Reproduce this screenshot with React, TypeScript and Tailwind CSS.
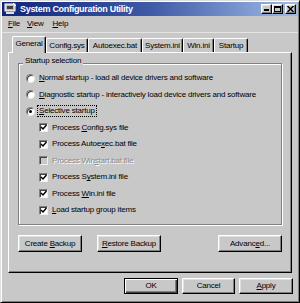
import React from "react";

const raised =
  "border border-t-white border-l-white border-r-black border-b-black shadow-[inset_-1px_-1px_0_#808080,inset_1px_1px_0_#dfdfdf]";

function Btn({ children, w, def }: { children: React.ReactNode; w: string; def?: boolean }) {
  return (
    <div
      className={
        (def
          ? "border border-black shadow-[inset_1px_1px_0_#fff,inset_-1px_-1px_0_#404040,inset_-2px_-2px_0_#808080] "
          : raised + " ") +
        w +
        " h-full flex items-center justify-center text-black"
      }
    >
      <span>{children}</span>
    </div>
  );
}

function Radio({ checked }: { checked?: boolean }) {
  return (
    <span className="w-[9px] h-[9px] shrink-0 rounded-full bg-white border border-t-[#808080] border-l-[#808080] border-r-[#e8e8e8] border-b-[#e8e8e8] shadow-[inset_1px_1px_0_#404040] flex items-center justify-center">
      {checked && <span className="w-[3px] h-[3px] rounded-full bg-black" />}
    </span>
  );
}

function Check({ checked, disabled }: { checked?: boolean; disabled?: boolean }) {
  return (
    <span
      className={
        "w-[9px] h-[9px] shrink-0 border border-t-[#808080] border-l-[#808080] border-r-[#f0f0f0] border-b-[#f0f0f0] shadow-[inset_1px_1px_0_#404040] flex items-center justify-center " +
        (disabled ? "bg-[#c8c8c8]" : "bg-white")
      }
    >
      {checked && (
        <svg width="7" height="7" viewBox="0 0 7 7">
          <path d="M1 3 L3 5 L6.5 1" stroke="#000" strokeWidth="1.5" fill="none" />
        </svg>
      )}
    </span>
  );
}

function Tab({ label, w, selected }: { label: React.ReactNode; w: string; selected?: boolean }) {
  return (
    <div
      className={
        w +
        " flex items-center justify-center rounded-t-[2px] border-t border-l border-r border-t-white border-l-white border-r-black shadow-[inset_-1px_0_0_#808080] bg-[#c8c8c8] " +
        (selected ? "h-[17px] -mb-[1px] relative z-10 pb-[2px]" : "h-[14px]")
      }
    >
      {label}
    </div>
  );
}

export default function App() {
  return (
    <div className="w-[300px] h-[303px] bg-[#c8c8c8] border border-t-[#dfdfdf] border-l-[#dfdfdf] border-r-black border-b-black shadow-[inset_1px_1px_0_#fff,inset_-1px_-1px_0_#808080] p-[1px] font-['Liberation_Sans',Arial,sans-serif] text-[8px] tracking-[-0.2px] text-black leading-none overflow-hidden">
      {/* Title bar */}
      <div className="h-[14px] flex items-center bg-linear-to-r from-[#12247a] via-[#3f5aa6] to-[#a3bde6]">
        <svg width="13" height="12" viewBox="0 0 13 12" className="ml-[2px]">
          <rect x="1" y="1" width="10" height="7" fill="#c0c0c0" stroke="#fff" strokeWidth="1" />
          <rect x="3" y="3" width="6" height="3" fill="#404040" />
          <rect x="2" y="9" width="8" height="2" fill="#e0e0e0" />
          <path d="M9 0 L12 3" stroke="#fff" strokeWidth="1" />
        </svg>
        <span className="ml-[3px] text-white font-bold text-[9px] tracking-[-0.3px]">System Configuration Utility</span>
        <div className="ml-auto flex items-center mr-[2px]">
          <div className={raised + " w-[11px] h-[10px] bg-[#c8c8c8] flex items-end justify-center pb-[2px]"}>
            <span className="w-[5px] h-[2px] bg-black -ml-[1px]" />
          </div>
          <div className={raised + " w-[11px] h-[10px] bg-[#c8c8c8] flex items-center justify-center"}>
            <span className="w-[7px] h-[6px] border border-black border-t-2" />
          </div>
          <div className={raised + " ml-[2px] w-[11px] h-[10px] bg-[#c8c8c8] flex items-center justify-center"}>
            <svg width="7" height="6" viewBox="0 0 7 6">
              <path d="M0.5 0 L6.5 6 M6.5 0 L0.5 6" stroke="#000" strokeWidth="1.5" />
            </svg>
          </div>
        </div>
      </div>

      {/* Menu */}
      <div className="h-[17px] flex items-center border-b border-b-[#e4e4e4]">
        <span className="ml-[6px]"><u>F</u>ile</span>
        <span className="ml-[7px]"><u>V</u>iew</span>
        <span className="ml-[9px]"><u>H</u>elp</span>
      </div>

      {/* Tabs */}
      <div className="mt-[3px] ml-[6px] pl-[4px] h-[16px] flex items-end">
        <Tab label="General" w="w-[34px]" selected />
        <Tab label="Config.sys" w="w-[42px]" />
        <Tab label="Autoexec.bat" w="w-[54px]" />
        <Tab label="System.ini" w="w-[41px]" />
        <Tab label="Win.ini" w="w-[31px]" />
        <Tab label="Startup" w="w-[34px]" />
      </div>

      {/* Panel */}
      <div className="ml-[6px] w-[284px] h-[221px] border border-t-white border-l-white border-r-black border-b-black shadow-[inset_-1px_-1px_0_#808080] pl-[9px] pt-[10px]">
        <div className="relative w-[264px] h-[162px] border border-[#808080] shadow-[1px_1px_0_#fff,inset_1px_1px_0_#fff] pt-[6px] pl-[7px]">
          <span className="absolute left-[4px] top-[-8px] leading-[10px] px-[2px] bg-[#c8c8c8]">Startup selection</span>
          <div className="h-[16.5px] flex items-center gap-[4px]">
            <Radio />
            <span><u>N</u>ormal startup - load all device drivers and software</span>
          </div>
          <div className="h-[16.5px] flex items-center gap-[4px]">
            <Radio />
            <span><u>D</u>iagnostic startup - interactively load device drivers and software</span>
          </div>
          <div className="h-[16.5px] flex items-center gap-[2px]">
            <Radio checked />
            <span className="border border-dotted border-black px-[1px] py-[1px]"><u>S</u>elective startup</span>
          </div>
          <div className="pl-[13px]">
            <div className="h-[16.5px] flex items-center gap-[4px]">
              <Check checked />
              <span>Process <u>C</u>onfig.sys file</span>
            </div>
            <div className="h-[16.5px] flex items-center gap-[4px]">
              <Check checked />
              <span>Process Autoe<u>x</u>ec.bat file</span>
            </div>
            <div className="h-[16.5px] flex items-center gap-[4px]">
              <Check disabled />
              <span className="text-[#8a8a8a] [text-shadow:1px_1px_0_#fff]">Process Win<u>s</u>tart.bat file</span>
            </div>
            <div className="h-[16.5px] flex items-center gap-[4px]">
              <Check checked />
              <span>Process S<u>y</u>stem.ini file</span>
            </div>
            <div className="h-[16.5px] flex items-center gap-[4px]">
              <Check checked />
              <span>Process <u>W</u>in.ini file</span>
            </div>
            <div className="h-[16.5px] flex items-center gap-[4px]">
              <Check checked />
              <span><u>L</u>oad startup group items</span>
            </div>
          </div>
        </div>
        <div className="mt-[10px] w-[264px] h-[17px] flex">
          <Btn w="w-[64px]">Create <u>B</u>ackup</Btn>
          <div className="ml-[15px] h-full flex">
            <Btn w="w-[64px]"><u>R</u>estore Backup</Btn>
          </div>
          <div className="ml-auto h-full flex">
            <Btn w="w-[64px]">Advanc<u>e</u>d...</Btn>
          </div>
        </div>
      </div>

      {/* Bottom buttons */}
      <div className="mt-[5px] h-[16px] flex justify-end pr-[5px] gap-[4px]">
        <Btn w="w-[54px]" def>OK</Btn>
        <Btn w="w-[53px]">Cancel</Btn>
        <Btn w="w-[54px]"><u>A</u>pply</Btn>
      </div>
    </div>
  );
}
